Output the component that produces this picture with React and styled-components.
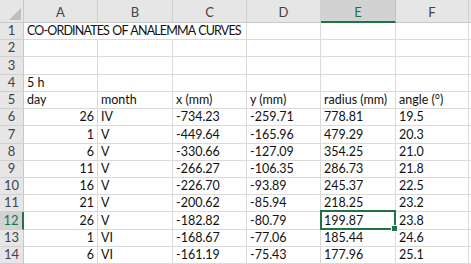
import React from "react";
import styled, { createGlobalStyle, css } from "styled-components";

const Global = createGlobalStyle`
  html, body { margin: 0; padding: 0; background: #fff; }
  body { font-family: Lato, "Open Sans", "Liberation Sans", sans-serif; }
`;

const Sheet = styled.div`
  display: grid;
  grid-template-columns: 24px 74px 75px 74px 74px 75px 73px 2px;
  grid-template-rows: 23px repeat(14, 17.22px);
  width: 471px;
  height: 264px;
  overflow: hidden;
  background: #fff;
`;

const Corner = styled.div`
  position: relative;
  background: #e6e6e6;
  border-right: 1px solid #c8c8c8;
  border-bottom: 1px solid #c8c8c8;
  box-sizing: border-box;
  &::after {
    content: "";
    position: absolute;
    right: 2px;
    bottom: 2px;
    width: 0;
    height: 0;
    border-left: 12px solid transparent;
    border-bottom: 12px solid #bdbdbd;
  }
`;

const ColHead = styled.div`
  display: flex;
  align-items: center;
  justify-content: center;
  box-sizing: border-box;
  background: ${(p) => (p.$active ? "#d2d2d2" : "#e6e6e6")};
  color: ${(p) => (p.$active ? "#217346" : "#444")};
  font-size: 13px;
  padding-top: 2px;
  border-right: 1px solid ${(p) => (p.$active ? "#c2c2c2" : "#d0d0d0")};
  border-bottom: ${(p) => (p.$active ? "2px solid #217346" : "1px solid #c8c8c8")};
`;

const RowHead = styled.div`
  display: flex;
  align-items: flex-end;
  justify-content: center;
  box-sizing: border-box;
  background: ${(p) => (p.$active ? "#d2d2d2" : "#e6e6e6")};
  color: ${(p) => (p.$active ? "#217346" : "#444")};
  font-size: 13px;
  line-height: 15px;
  padding-bottom: 1px;
  border-bottom: 1px solid #d0d0d0;
  border-right: ${(p) => (p.$active ? "2px solid #217346" : "1px solid #c8c8c8")};
`;

const Cell = styled.div`
  position: relative;
  display: flex;
  align-items: flex-end;
  justify-content: ${(p) => (p.$right ? "flex-end" : "flex-start")};
  box-sizing: border-box;
  padding: 0 3px 1px 3px;
  font-size: 12.5px;
  line-height: 15px;
  color: #111;
  white-space: nowrap;
  overflow: visible;
  border-right: 1px solid ${(p) => (p.$noRight ? "transparent" : "#dadada")};
  border-bottom: 1px solid #dadada;
  ${(p) =>
    p.$selected &&
    css`
      &::before {
        content: "";
        position: absolute;
        left: -1px;
        top: -2px;
        right: -1px;
        bottom: -1px;
        border: 2px solid #217346;
        pointer-events: none;
        z-index: 2;
      }
      &::after {
        content: "";
        position: absolute;
        right: -3px;
        bottom: -3px;
        width: 5px;
        height: 5px;
        background: #217346;
        border: 1px solid #fff;
        z-index: 3;
      }
    `}
`;

const Title = styled.span`
  position: relative;
  z-index: 1;
  letter-spacing: -0.85px;
  word-spacing: 1px;
`;

const Filler = styled.div`
  background: ${(p) => (p.$head ? "#e6e6e6" : "#fff")};
  border-bottom: 1px solid ${(p) => (p.$head ? "#c8c8c8" : "#dadada")};
  box-sizing: border-box;
`;

const cols = ["A", "B", "C", "D", "E", "F"];

const data = [
  [26, "IV", "-734.23", "-259.71", "778.81", "19.5"],
  [1, "V", "-449.64", "-165.96", "479.29", "20.3"],
  [6, "V", "-330.66", "-127.09", "354.25", "21.0"],
  [11, "V", "-266.27", "-106.35", "286.73", "21.8"],
  [16, "V", "-226.70", "-93.89", "245.37", "22.5"],
  [21, "V", "-200.62", "-85.94", "218.25", "23.2"],
  [26, "V", "-182.82", "-80.79", "199.87", "23.8"],
  [1, "VI", "-168.67", "-77.06", "185.44", "24.6"],
  [6, "VI", "-161.19", "-75.43", "177.96", "25.1"],
];

const rows = [
  ["CO-ORDINATES OF ANALEMMA CURVES", "", "", "", "", ""],
  ["", "", "", "", "", ""],
  ["", "", "", "", "", ""],
  ["5 h", "", "", "", "", ""],
  ["day", "month", "x (mm)", "y (mm)", "radius (mm)", "angle (°)"],
  ...data,
];

export default function App() {
  return (
    <>
      <Global />
      <Sheet>
        <Corner />
        {cols.map((c) => (
          <ColHead key={c} $active={c === "E"}>
            {c}
          </ColHead>
        ))}
        <Filler $head />
        {rows.map((r, i) => {
          const rn = i + 1;
          return (
            <React.Fragment key={rn}>
              <RowHead $active={rn === 12}>{rn}</RowHead>
              {r.map((v, j) => (
                <Cell
                  key={j}
                  $right={typeof v === "number"}
                  $noRight={rn === 1 && j < 2}
                  $selected={rn === 12 && j === 4}
                >
                  {rn === 1 && j === 0 ? <Title>{v}</Title> : v}
                </Cell>
              ))}
              <Filler />
            </React.Fragment>
          );
        })}
      </Sheet>
    </>
  );
}
